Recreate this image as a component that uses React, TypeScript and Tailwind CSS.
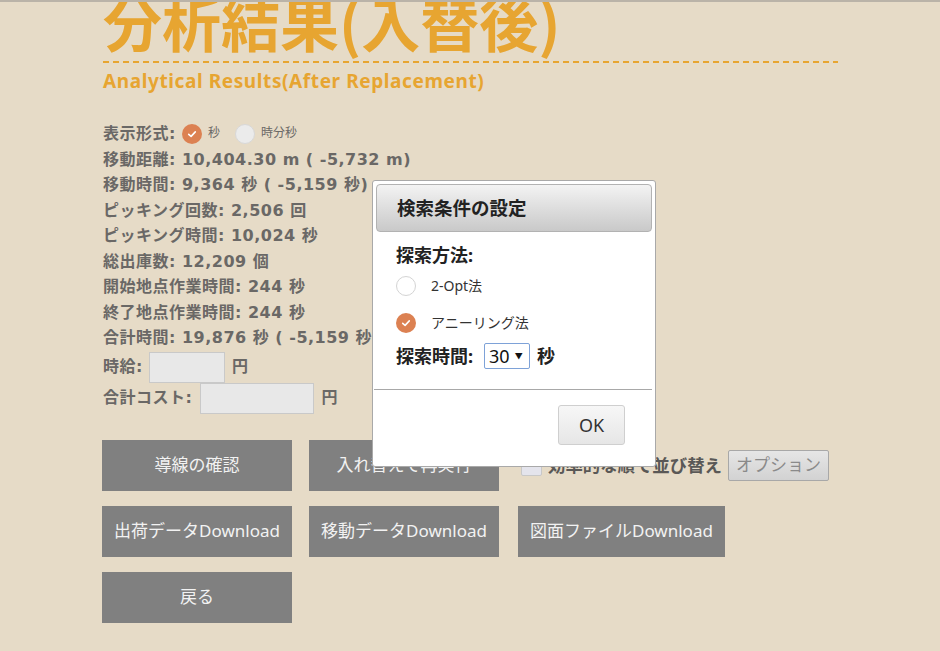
import React from "react";

const jp = { fontFamily: '"Noto Sans", "Noto Sans CJK JP", sans-serif' };
const dv = { fontFamily: '"DejaVu Sans", "Noto Sans CJK JP", sans-serif' };

function Check({ className = "" }: { className?: string }) {
  return (
    <span className={"inline-flex items-center justify-center rounded-full bg-[#dc8152] " + className}>
      <svg viewBox="0 0 20 20" className="w-[60%] h-[60%]">
        <path d="M4.5 10.5 L8.5 14 L15.5 6.5" fill="none" stroke="#fff" strokeWidth="2.6" strokeLinecap="round" strokeLinejoin="round" />
      </svg>
    </span>
  );
}

export default function App() {
  const lines = [
    "移動距離: 10,404.30 m ( -5,732 m)",
    "移動時間: 9,364 秒 ( -5,159 秒)",
    "ピッキング回数: 2,506 回",
    "ピッキング時間: 10,024 秒",
    "総出庫数: 12,209 個",
    "開始地点作業時間: 244 秒",
    "終了地点作業時間: 244 秒",
    "合計時間: 19,876 秒 ( -5,159 秒)",
  ];
  const btn =
    "h-[51px] w-[190px] bg-[#808080] text-[#f2f2f2] text-[17px] flex items-center justify-center whitespace-nowrap";
  return (
    <div style={jp} className="relative w-full h-[651px] overflow-hidden bg-[#e6dbc7] border-t-2 border-[#bab3a8]">
      <div className="ml-[103px] w-[735px]">
        <h1
          style={{ fontFamily: '"Noto Sans CJK JP", sans-serif' }}
          className="text-[59px] font-bold leading-none text-[#e7a531] mt-[-10px] h-[69px] whitespace-nowrap"
        >
          分析結果(入替後)
        </h1>
        <div className="h-[2px] bg-[repeating-linear-gradient(90deg,#e7a531_0_6px,transparent_6px_10px)]" />
        <div className="mt-[6px] text-[19px] tracking-[0.6px] font-bold text-[#e7a531] leading-[24px] whitespace-nowrap">
          Analytical Results(After Replacement)
        </div>
      </div>

      <div style={dv} className="ml-[103px] mt-[28px] text-[16px] tracking-[0.5px] font-bold text-[#6a6866] leading-[25.5px]">
        <div className="flex items-center h-[25.5px]">
          <span>表示形式:</span>
          <Check className="ml-[6px] w-[20px] h-[20px]" />
          <span className="ml-[6px] text-[12px] font-normal tracking-normal">秒</span>
          <span className="ml-[15px] w-[20px] h-[20px] rounded-full bg-[#ebebeb] border border-[#d8d8d8]" />
          <span className="ml-[6px] text-[12px] font-normal tracking-normal">時分秒</span>
        </div>
        {lines.map((l) => (
          <div key={l} className="whitespace-nowrap">{l}</div>
        ))}
        <div className="flex items-center h-[31px] mt-[1px]">
          <span>時給:</span>
          <span className="ml-[6px] w-[76px] h-[31px] bg-[#e8e8e8] border border-[#c9c9c9]" />
          <span className="ml-[7px]">円</span>
        </div>
        <div className="flex items-center h-[31px]">
          <span>合計コスト:</span>
          <span className="ml-[8px] w-[114px] h-[31px] bg-[#e8e8e8] border border-[#c9c9c9]" />
          <span className="ml-[7px]">円</span>
        </div>
      </div>

      <div className="ml-[102px] mt-[26px] flex flex-col gap-[15px]">
        <div className="flex items-center gap-[17px]">
          <div className={btn}>導線の確認</div>
          <div className={btn}>入れ替えて再実行</div>
          <div className="flex items-center ml-[5px]">
            <span className="w-[21px] h-[21px] bg-[#e4e4ec] border border-[#c8c8c8] rounded-[2px]" />
            <span className="ml-[6px] text-[17.4px] font-bold text-[#5a5856] whitespace-nowrap">効率的な順で並び替え</span>
            <span className="ml-[6px] h-[31px] px-[7px] flex items-center text-[17px] text-[#8a8a8a] bg-gradient-to-b from-[#e6e6e6] to-[#d2d2d2] border border-[#a8a8a8] rounded-[2px] whitespace-nowrap">
              オプション
            </span>
          </div>
        </div>
        <div className="flex items-center gap-[17px]">
          <div className={btn}>出荷データDownload</div>
          <div className={btn}>移動データDownload</div>
          <div className="h-[51px] ml-[2px] px-[12px] bg-[#808080] text-[#f2f2f2] text-[17px] flex items-center justify-center whitespace-nowrap">
            図面ファイルDownload
          </div>
        </div>
        <div className="flex">
          <div className={btn}>戻る</div>
        </div>
      </div>

      {/* dialog */}
      <div className="absolute left-[372px] top-[178px] w-[284px] h-[287px] bg-white border border-[#a9a9a9] rounded-[3px] p-[3px] flex flex-col">
        <div className="h-[48px] rounded-[4px] border border-[#b2b2b2] bg-gradient-to-b from-[#f3f3f3] to-[#c9c9c9] flex items-center pl-[20px] text-[18.5px] font-bold text-[#222]">
          検索条件の設定
        </div>
        <div className="pl-[20px] pt-[10px] text-[#222]">
          <div className="text-[18px] font-bold leading-[26px]">探索方法:</div>
          <div className="flex items-center h-[33px] mt-[1px]">
            <span className="w-[20px] h-[20px] rounded-full bg-white border border-[#d4d4d4]" />
            <span className="ml-[15px] text-[14px] text-[#333]">2-Opt法</span>
          </div>
          <div className="flex items-center h-[33px] mt-[4px]">
            <Check className="w-[20px] h-[20px]" />
            <span className="ml-[15px] text-[14px] text-[#333]">アニーリング法</span>
          </div>
          <div className="flex items-center h-[34px]">
            <span className="text-[18px] font-bold whitespace-nowrap">探索時間:</span>
            <span className="ml-[11px] w-[46px] h-[26px] border border-[#7ea2d8] rounded-[2px] flex items-center pl-[4px] text-[18px] text-[#111]">
              30
              <span className="ml-[5px] text-[8px]">▼</span>
            </span>
            <span className="ml-[7px] text-[18px] font-bold">秒</span>
          </div>
        </div>
        <div className="mt-[16px] ml-[-2px] h-px bg-[#a8a8a8]" />
        <div className="flex justify-end pr-[27px] pt-[15px]">
          <span className="w-[67px] h-[40px] rounded-[3px] border border-[#cfcfcf] bg-gradient-to-b from-[#f7f7f7] to-[#e6e6e6] flex items-center justify-center text-[18px] text-[#333]">
            OK
          </span>
        </div>
      </div>
    </div>
  );
}
